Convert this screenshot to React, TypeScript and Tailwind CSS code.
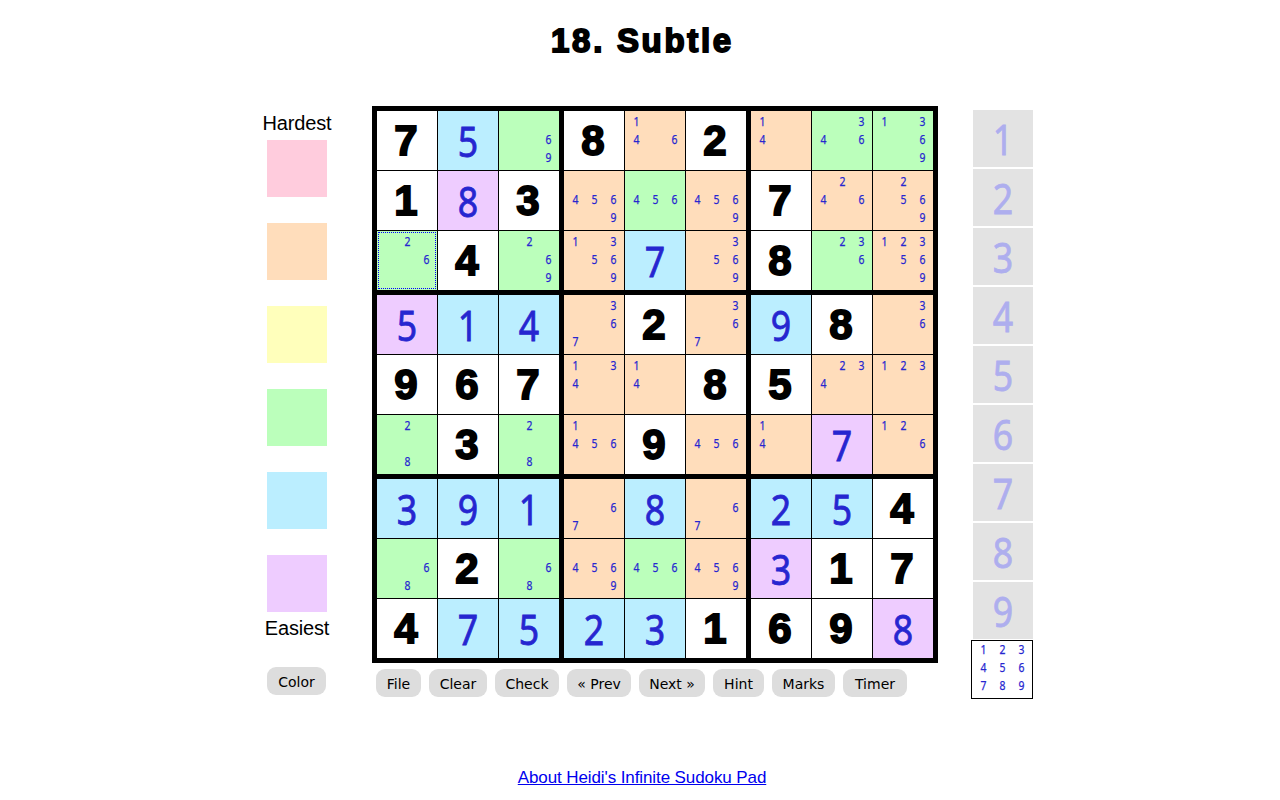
const rows = [
  ["7", "B5", "g69", "8", "o146", "2", "o14", "g346", "g1369"],
  ["1", "P8", "3", "o4569", "g456", "o4569", "7", "o246", "o2569"],
  ["g26", "4", "g269", "o13569", "B7", "o3569", "8", "g236", "o123569"],
  ["P5", "B1", "B4", "o367", "2", "o367", "B9", "8", "o36"],
  ["9", "6", "7", "o134", "o14", "8", "5", "o234", "o123"],
  ["g28", "3", "g28", "o1456", "9", "o456", "o14", "P7", "o126"],
  ["B3", "B9", "B1", "o67", "B8", "o67", "B2", "B5", "4"],
  ["g68", "2", "g68", "o4569", "g456", "o4569", "P3", "1", "7"],
  ["4", "B7", "B5", "B2", "B3", "1", "6", "9", "P8"],
];

const swatches = ["bg-[#ffccdd]", "bg-[#ffddbb]", "bg-[#ffffbb]", "bg-[#bbffbb]", "bg-[#bbeeff]", "bg-[#eeccff]"];
const buttons: [string, string][] = [
  ["File", "w-[45px]"],
  ["Clear", "w-[58px]"],
  ["Check", "w-[64px]"],
  ["« Prev", "w-[64px]"],
  ["Next »", "w-[66px]"],
  ["Hint", "w-[51px]"],
  ["Marks", "w-[63px]"],
  ["Timer", "w-[64px]"],
];
const digits = ["1", "2", "3", "4", "5", "6", "7", "8", "9"];

function MarkGrid({ value, className }: { value: string; className: string }) {
  return (
    <div
      className={`grid grid-cols-[19px_19px_19px] grid-rows-[18px_18px_18px] content-center justify-center text-center text-[13px] leading-[18px] text-[#2626d0] [-webkit-text-stroke:0.25px_#2626d0] [font-family:'Noto_Sans',sans-serif] ${className}`}
    >
      {digits.map((d) => (
        <span key={d} className="inline-block scale-x-[0.8]">
          {value.includes(d) ? d : ""}
        </span>
      ))}
    </div>
  );
}

function Cell({ token, selected }: { token: string; selected: boolean }) {
  const kind = token[0];
  const rest = token.slice(1);
  const base = "h-[59px] w-[60px] flex items-center justify-center";
  if (kind === "g" || kind === "o") {
    const bg = kind === "g" ? "bg-[#bbffbb]" : "bg-[#ffddbb]";
    return (
      <div className={`${base} ${bg} relative`}>
        <MarkGrid value={rest} className="pb-[4px]" />
        {selected && <div className="absolute inset-[1px] border border-dotted border-[#0000ff]" />}
      </div>
    );
  }
  if (kind === "B" || kind === "P") {
    const bg = kind === "B" ? "bg-[#bbeeff]" : "bg-[#eeccff]";
    return (
      <div className={`${base} ${bg} text-[42px] leading-none text-[#2626d0] [-webkit-text-stroke:0.8px_#2626d0] [font-family:'Noto_Sans',sans-serif]`}>
        <span className="inline-block scale-x-[0.85]">{rest}</span>
      </div>
    );
  }
  return (
    <div className={`${base} bg-white pr-[2px] text-[42px] leading-none font-bold text-black [-webkit-text-stroke:1.8px_black] [font-family:'Liberation_Sans',sans-serif]`}>
      {token}
    </div>
  );
}

function Box({ bx, by }: { bx: number; by: number }) {
  const cells: { token: string; key: string; selected: boolean }[] = [];
  for (let r = by * 3; r < by * 3 + 3; r++) {
    for (let c = bx * 3; c < bx * 3 + 3; c++) {
      cells.push({ token: rows[r][c], key: `${r}-${c}`, selected: r === 2 && c === 0 });
    }
  }
  return (
    <div className="grid grid-cols-3 gap-px bg-black">
      {cells.map((cell) => (
        <Cell key={cell.key} token={cell.token} selected={cell.selected} />
      ))}
    </div>
  );
}

function GrayButton({ label, className }: { label: string; className: string }) {
  return (
    <button className={`h-[28px] rounded-[9px] bg-[#dddddd] pt-[2px] text-[14px] text-black [font-family:'DejaVu_Sans',sans-serif] ${className}`}>
      {label}
    </button>
  );
}

export default function App() {
  return (
    <div className="min-h-[800px] w-[1280px] bg-white [font-family:'Liberation_Sans',sans-serif]">
      <div className="flex h-[106px] items-start justify-center pl-[5px] pt-[22px]">
        <h1 className="text-[33px] leading-[38px] font-bold tracking-[2.7px] text-black [-webkit-text-stroke:1.8px_black]">
          18. Subtle
        </h1>
      </div>

      <div className="flex items-start pl-[262px]">
        <div className="flex w-[70px] flex-col items-center">
          <div className="flex h-[34px] items-center text-[20px] tracking-[-0.15px] text-black">Hardest</div>
          <div className="flex flex-col gap-[26px]">
            {swatches.map((s) => (
              <div key={s} className={`h-[57px] w-[60px] ${s}`} />
            ))}
          </div>
          <div className="flex h-[32px] items-center text-[20px] tracking-[-0.15px] text-black">Easiest</div>
          <GrayButton label="Color" className="mt-[23px] mr-[1px] w-[59px]" />
        </div>

        <div className="ml-[40px] flex flex-col">
          <div className="grid w-[566px] grid-cols-3 gap-[5px] bg-black p-[5px]">
            {[0, 1, 2].flatMap((by) => [0, 1, 2].map((bx) => <Box key={`${bx}-${by}`} bx={bx} by={by} />))}
          </div>
          <div className="mt-[6px] flex gap-2 pl-[4px]">
            {buttons.map(([label, width]) => (
              <GrayButton key={label} label={label} className={width} />
            ))}
          </div>
        </div>

        <div className="ml-[33px] flex w-[62px] flex-col items-end pt-[4px]">
          <div className="flex flex-col gap-[2px]">
            {digits.map((d) => (
              <div
                key={d}
                className="flex h-[57px] w-[60px] items-center justify-center bg-[#e3e3e3] text-[42px] leading-none text-[#aeaeee] [-webkit-text-stroke:0.8px_#aeaeee] [font-family:'Noto_Sans',sans-serif]"
              >
                <span className="inline-block scale-x-[0.85]">{d}</span>
              </div>
            ))}
          </div>
          <MarkGrid value="123456789" className="mt-px h-[59px] w-[62px] border border-black pb-[6px]" />
        </div>
      </div>

      <div className="mt-[69px] flex justify-center pl-[4px]">
        <a href="#" className="text-[17px] leading-[20px] tracking-[-0.1px] text-[#0000ee] underline">
          About Heidi's Infinite Sudoku Pad
        </a>
      </div>
    </div>
  );
}
